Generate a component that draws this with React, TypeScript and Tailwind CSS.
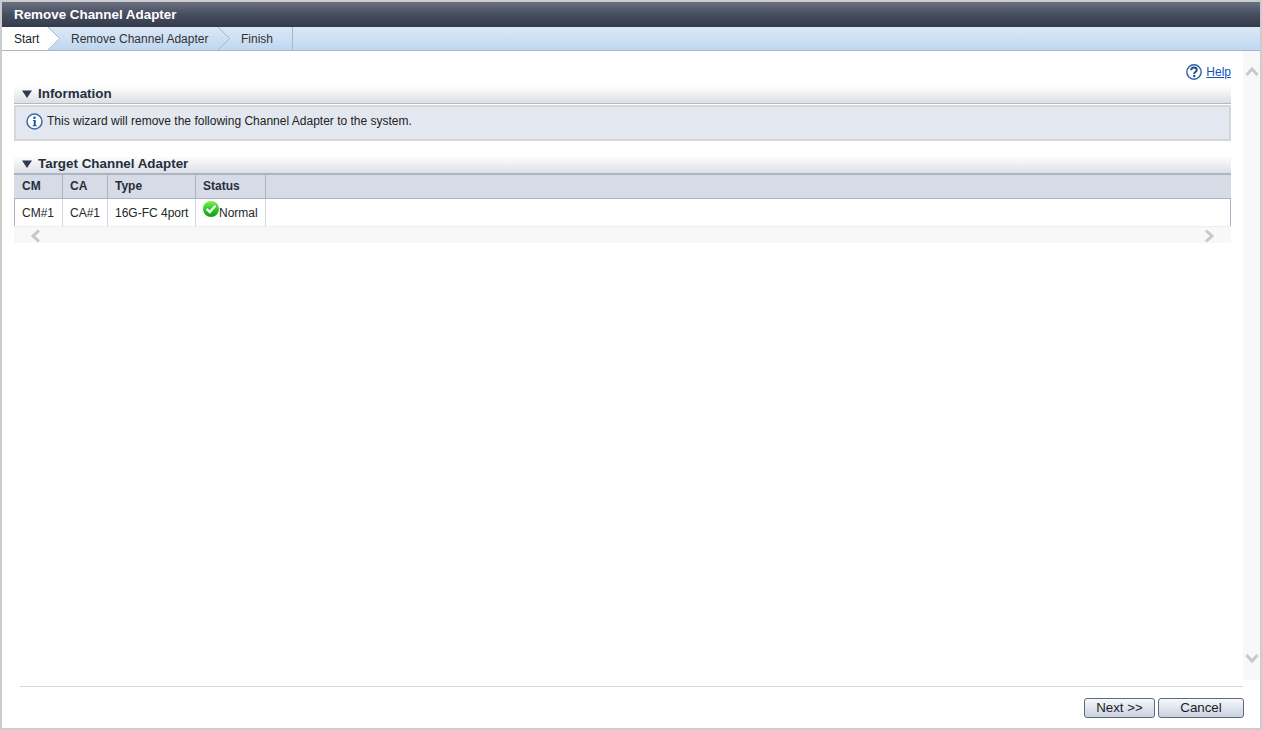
const font = "font-['Liberation_Sans',Arial,sans-serif]";

function SectionHeader({ title, height }: { title: string; height: string }) {
  return (
    <div className={`${height} flex items-center bg-gradient-to-b from-white to-[#dcdfe4] pb-[1px] pl-[8px]`}>
      <svg width="10" height="8" viewBox="0 0 10 8" className="mr-[6px]">
        <path d="M0 0.5h10L5 8z" fill="#2f3b52" />
      </svg>
      <span className="text-[13.4px] font-bold leading-none text-[#262f3d]">{title}</span>
    </div>
  );
}

function Chevron({ fill }: { fill: string }) {
  return (
    <svg width="12" height="23" viewBox="0 0 12 23" className="absolute left-full top-0 z-10">
      <path d="M0 0 L11.5 11.5 L0 23" fill={fill} stroke="#a9b8c9" />
    </svg>
  );
}

function InfoIcon() {
  return (
    <svg width="17" height="17" viewBox="0 0 17 17">
      <circle cx="8.5" cy="8.5" r="7.5" fill="#fff" stroke="#3d6aa8" strokeWidth="1.5" />
      <circle cx="8.5" cy="4.8" r="1.3" fill="#1f55a5" />
      <path d="M6.9 7h2.8v5.2h1.1v1.1H6.7v-1.1h1V8.1h-.8z" fill="#1f55a5" />
    </svg>
  );
}

function HelpIcon() {
  return (
    <svg width="16" height="16" viewBox="0 0 16 16">
      <circle cx="8" cy="8" r="7.2" fill="#fff" stroke="#2f5f9f" strokeWidth="1.4" />
      <path d="M5.2 6.2C5.2 4.5 6.5 3.5 8 3.5s2.8 1 2.8 2.5c0 2.1-2.6 2-2.6 3.9" fill="none" stroke="#1f4f93" strokeWidth="1.9" />
      <rect x="7.1" y="10.9" width="2.2" height="2.2" fill="#1f4f93" />
    </svg>
  );
}

function NormalIcon() {
  return (
    <svg width="16" height="16" viewBox="0 0 16 16" className="shrink-0">
      <defs>
        <linearGradient id="ok" x1="0" y1="0" x2="0" y2="1">
          <stop offset="0" stopColor="#7cf05a" />
          <stop offset="0.5" stopColor="#2ecb22" />
          <stop offset="1" stopColor="#0d9a12" />
        </linearGradient>
      </defs>
      <circle cx="8" cy="8" r="8" fill="url(#ok)" />
      <path d="M3.6 7.8l3.2 3.2 5.6-6.2" fill="none" stroke="#fff" strokeWidth="2.4" />
    </svg>
  );
}

function Arrow({ d }: { d: string }) {
  return (
    <svg width="14" height="14" viewBox="0 0 14 14">
      <path d={d} fill="none" stroke="#c8c8c8" strokeWidth="3" />
    </svg>
  );
}

function WizardButton({ label, width }: { label: string; width: string }) {
  return (
    <button className={`${width} h-[20px] rounded-[3px] border border-[#5f6b7a] bg-gradient-to-b from-[#f6f8fb] to-[#c9d2df] pb-[1px] text-[13.33px] leading-none text-[#1c1c1c]`}>
      {label}
    </button>
  );
}

const headers = [
  { label: "CM", cls: "w-[49px] pl-[8px]" },
  { label: "CA", cls: "w-[45px] pl-[7px]" },
  { label: "Type", cls: "w-[88px] pl-[7px]" },
  { label: "Status", cls: "w-[70px] pl-[7px]" },
];

export default function App() {
  return (
    <div className={`${font} flex h-[730px] w-[1262px] flex-col overflow-hidden border-2 border-[#cccccc] bg-white`}>
      <div className="flex h-[25px] shrink-0 items-center bg-gradient-to-b from-[#6a7080] via-[#474e60] to-[#343b4c] pl-[12px]">
        <span className="text-[13.4px] font-bold leading-none text-white">Remove Channel Adapter</span>
      </div>

      <div className="flex h-[24px] shrink-0 border-b border-[#a9b8c9] bg-gradient-to-b from-[#dbe8f6] to-[#c0d7f0] text-[12px] leading-none">
        <div className="relative flex w-[46px] items-center bg-white pl-[12px] text-[#1c1c1c]">
          Start
          <Chevron fill="#ffffff" />
        </div>
        <div className="relative flex w-[170px] items-center pl-[23px] text-[#333333]">
          Remove Channel Adapter
          <Chevron fill="none" />
        </div>
        <div className="flex w-[75px] items-center border-r border-[#a9b8c9] pl-[23px] text-[#333333]">Finish</div>
      </div>

      <div className="flex min-h-0 flex-1">
        <div className="min-w-0 flex-1 px-[12px]">
          <div className="mt-[13px] flex h-[16px] items-center justify-end gap-[4px]">
            <HelpIcon />
            <a className="text-[12px] leading-none text-[#1155bb] underline">Help</a>
          </div>

          <div className="mt-[6px]">
            <div className="border-b border-[#b5bac2]">
              <SectionHeader title="Information" height="h-[17px]" />
            </div>
            <div className="mt-[1px] flex h-[36px] items-center gap-[4px] border-2 border-[#d4d6d8] bg-[#e3e8f0] pb-[4px] pl-[10px] text-[12px] text-[#222222]">
              <InfoIcon />
              <span>This wizard will remove the following Channel Adapter to the system.</span>
            </div>
          </div>

          <div className="mt-[15px]">
            <SectionHeader title="Target Channel Adapter" height="h-[17px]" />
            <div className="flex h-[25px] border-t-2 border-[#aab5c3] bg-[#d6dbe5] pb-[1px] text-[12px] font-bold text-[#262f3d]">
              {headers.map((h) => (
                <div key={h.label} className={`${h.cls} -mb-[1px] flex items-center border-r border-[#aab5c3] pb-[2px]`}>
                  {h.label}
                </div>
              ))}
            </div>
            <div className="flex h-[28px] border-x border-t border-[#aab5c3] text-[12px] text-[#262626]">
              <div className="flex w-[48px] items-center border-r border-[#d0d6de] pl-[7px]">CM#1</div>
              <div className="flex w-[45px] items-center border-r border-[#d0d6de] pl-[7px]">CA#1</div>
              <div className="flex w-[88px] items-center border-r border-[#d0d6de] pl-[7px]">16G-FC 4port</div>
              <div className="flex w-[70px] border-r border-[#d0d6de] pl-[7px] pt-[2px]">
                <NormalIcon />
                <span className="mt-[6px] leading-none">Normal</span>
              </div>
            </div>
            <div className="flex h-[17px] items-center justify-between border-t border-[#eeeeee] bg-[#f8f8f8] px-[15px] pt-[1px]">
              <Arrow d="M10 1.5L4 7l6 5.5" />
              <Arrow d="M4 1.5L10 7l-6 5.5" />
            </div>
          </div>
        </div>

        <div className="mb-[6px] flex w-[17px] shrink-0 flex-col items-center justify-between bg-[#f8f8f8] pb-[15px] pt-[14px]">
          <Arrow d="M1.5 10L7 4l5.5 6" />
          <Arrow d="M1.5 4L7 10l5.5-6" />
        </div>
      </div>

      <div className="h-[42px] shrink-0 pl-[18px] pr-[16px]">
        <div className="mr-[1px] border-t border-[#cfdad6]" />
        <div className="mt-[11px] flex justify-end gap-[3px]">
          <WizardButton label="Next >>" width="w-[71px]" />
          <WizardButton label="Cancel" width="w-[86px]" />
        </div>
      </div>
    </div>
  );
}
